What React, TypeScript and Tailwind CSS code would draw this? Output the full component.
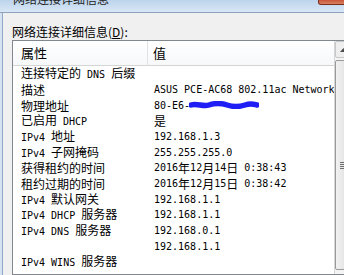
const rows: [string, string][] = [
  ['连接特定的 DNS 后缀', ''],
  ['描述', 'ASUS PCE-AC68 802.11ac Network Adapter'],
  ['物理地址', '80-E6-'],
  ['已启用 DHCP', '是'],
  ['IPv4 地址', '192.168.1.3'],
  ['IPv4 子网掩码', '255.255.255.0'],
  ['获得租约的时间', '2016年12月14日 0:38:43'],
  ['租约过期的时间', '2016年12月15日 0:38:42'],
  ['IPv4 默认网关', '192.168.1.1'],
  ['IPv4 DHCP 服务器', '192.168.1.1'],
  ['IPv4 DNS 服务器', '192.168.0.1'],
  ['', '192.168.1.1'],
  ['IPv4 WINS 服务器', ''],
]

// ascii runs get a narrow mono font so they come out half-width, like SimSun
function Mix({ text }: { text: string }) {
  const parts = text.split(/([\x20-\x7E]+)/).filter((p) => p !== '')
  return (
    <>
      {parts.map((p, i) =>
        /^[\x20-\x7E]+$/.test(p) ? (
          <span key={i} className="font-['DejaVu_Sans_Mono'] text-[10px] whitespace-pre">
            {p}
          </span>
        ) : (
          <span key={i}>{p}</span>
        )
      )}
    </>
  )
}

function Scrollbar() {
  return (
    <div className="w-[17px] shrink-0 flex flex-col border-l border-[#d6d6d6] bg-[#f4f4f4]">
      <div className="h-[17px] flex items-center justify-center border border-[#c8c8c8] bg-[#eeeeee] rounded-[2px]">
        <svg width="7" height="4" viewBox="0 0 7 4">
          <path d="M0 4 L3.5 0 L7 4 Z" fill="#4d4d4d" />
        </svg>
      </div>
      <div className="mt-[2px] h-[210px] border border-[#9a9a9a] rounded-[2px] bg-gradient-to-r from-[#f2f2f2] to-[#dcdcdc] flex flex-col items-center justify-center gap-[1px]">
        <div className="w-[6px] h-px bg-[#6f6f6f]" />
        <div className="w-[6px] h-px bg-[#6f6f6f]" />
        <div className="w-[6px] h-px bg-[#6f6f6f]" />
        <div className="w-[6px] h-px bg-[#6f6f6f]" />
      </div>
    </div>
  )
}

export default function App() {
  return (
    <div className="w-[344px] h-[275px] overflow-hidden bg-[#f0f0f0] flex flex-col font-['Noto_Sans_CJK_SC',sans-serif] text-[12px] text-black">
      {/* title bar, mostly scrolled off the top */}
      <div className="h-[13px] shrink-0 flex justify-between bg-gradient-to-b from-[#bcd4ec] to-[#d9e7f5] border-b border-[#8da2bb]">
        <div className="pl-[13px] -mt-[7px] leading-[12px] text-[12px] text-[#1e1e1e]">网络连接详细信息</div>
        <div className="w-[28px] h-[5px] mr-[-2px] bg-gradient-to-b from-[#c9553a] to-[#d8805f] border-x border-b border-[#7a2d1d] rounded-b-[3px]" />
      </div>

      <div className="flex flex-1 min-h-0">
        <div className="w-[3px] shrink-0 bg-[#d4e2f1] border-r border-[#93a8c4]" />
        <div className="w-[360px] shrink-0 flex flex-col pl-[9px]">
          <div className="mt-[12px] h-[14px] leading-[14px] text-[12px]">
            网络连接详细信息(<span className="underline">D</span>):
          </div>
          <div className="mt-[1px] w-[340px] flex-1 border border-[#828790] bg-white flex">
            <div className="w-[321px] shrink-0 overflow-hidden">
              <div className="h-[25px] flex border-b border-[#d5d5d5] bg-gradient-to-b from-white to-[#f7f8fa]">
                <div className="w-[135px] shrink-0 pl-[8px] flex items-center border-r border-[#e2e2e2] text-[13px]">属性</div>
                <div className="pl-[5px] flex items-center text-[13px]">值</div>
              </div>
              {rows.map(([k, v], i) => (
                <div key={i} className="h-[15.67px] flex items-center leading-[15px] whitespace-nowrap">
                  <div className="w-[136px] shrink-0 pl-[8px]">
                    <Mix text={k} />
                  </div>
                  <div className="pl-[5px] flex items-center">
                    <Mix text={v} />
                    {i === 2 && (
                      <svg width="70" height="8" viewBox="0 0 70 8" className="-ml-[1px]">
                        <path
                          d="M2 4 C8 2, 14 6, 20 4 S32 2, 38 4 S50 6, 56 4 S64 3, 68 4"
                          stroke="#1e1ef5"
                          strokeWidth="5.5"
                          strokeLinecap="round"
                          fill="none"
                        />
                      </svg>
                    )}
                  </div>
                </div>
              ))}
            </div>
            <Scrollbar />
          </div>
        </div>
      </div>
    </div>
  )
}
